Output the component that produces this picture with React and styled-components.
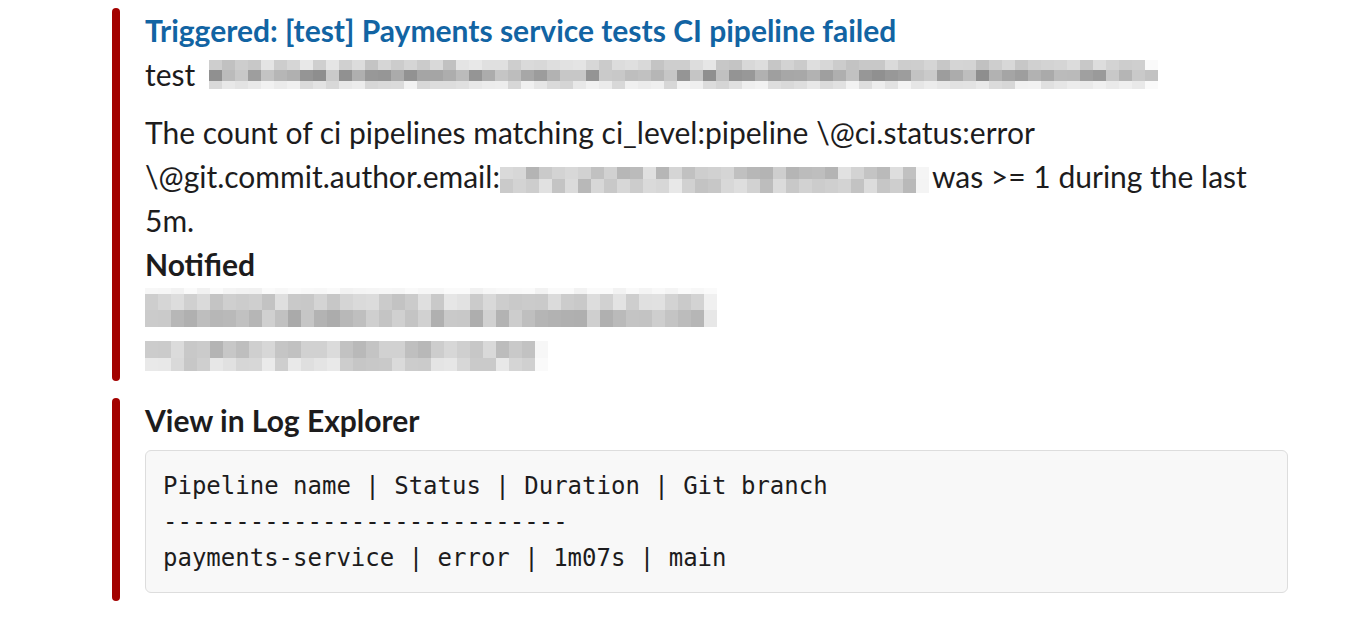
import React from 'react';
import styled, { createGlobalStyle } from 'styled-components';

const GlobalStyle = createGlobalStyle`
	html, body {
		margin: 0;
		padding: 0;
		background: #ffffff;
	}

	body {
		font-family: Lato, 'Noto Sans', sans-serif;
		color: #1d1c1d;
	}
`;

const Page = styled.div`
	width: 1346px;
	height: 618px;
	padding: 8px 58px 0 112px;
	box-sizing: border-box;
	overflow: hidden;
`;

const Attachment = styled.div`
	display: flex;
	gap: 25px;
	margin-top: ${props => props.$gap || 0}px;
`;

const Bar = styled.div`
	flex: 0 0 8px;
	width: 8px;
	border-radius: 4px;
	background: #a30200;
`;

const Body = styled.div`
	flex: 1;
	min-width: 0;
	font-size: 30px;
	line-height: 44px;
	padding-bottom: ${props => props.$bottom || 0}px;
`;

const Title = styled.div`
	font-weight: 700;
	color: #1264a3;
`;

const Line = styled.div`
	display: flex;
	align-items: center;
	gap: 14px;
`;

const Paragraph = styled.div`
	margin-top: 14px;
`;

const Heading = styled.div`
	font-weight: 700;
`;

const BlurList = styled.div`
	display: flex;
	flex-direction: column;
	align-items: flex-start;
	gap: 14px;
	padding: 2px 0 10px;
`;

const PixelGrid = styled.span`
	display: inline-grid;
	grid-auto-flow: column;
	grid-auto-columns: 13px;
	vertical-align: middle;
	margin: ${props => props.$margin || '0'};
`;

const Cell = styled.span`
	display: block;
	width: 13px;
`;

const CodeBlock = styled.pre`
	margin: 8px 0 0;
	padding: 17px 16px 16px 17px;
	background: #f8f8f8;
	border: 1px solid #dddddd;
	border-radius: 6px;
	font-family: 'DejaVu Sans Mono', 'Liberation Mono', monospace;
	font-size: 24px;
	line-height: 36px;
	color: #1d1c1d;
	white-space: pre-wrap;
`;

// cheap deterministic noise so the redacted blocks look the same on each load
const noise = (seed, i, j) => {
	const v = Math.sin(seed * 97.3 + i * 12.9898 + j * 78.233) * 43758.5453;
	return v - Math.floor(v);
};

const Pixelated = ({ width, rows, seed = 1, margin, fadeIn = 0 }) => {
	const cols = Math.round(width / 13);
	const cells = [];
	for (let i = 0; i < cols; i++) {
		rows.forEach((row, j) => {
			const n = noise(seed, i, j);
			const light = Math.round(row.base + (n - 0.5) * row.spread);
			const fade = i === cols - 1 ? 40 : i < fadeIn ? 18 : 0;
			const c = Math.min(250, light + fade);
			cells.push(
				<Cell
					key={`${i}-${j}`}
					style={{ height: row.h, background: `rgb(${c}, ${c}, ${c})`, gridRow: j + 1, gridColumn: i + 1 }}
				/>
			);
		});
	}
	return <PixelGrid $margin={margin}>{cells}</PixelGrid>;
};

const inlineRows = [
	{ h: 10, base: 212, spread: 40 },
	{ h: 11, base: 172, spread: 60 },
	{ h: 8, base: 228, spread: 30 },
];

const emailRows = [
	{ h: 12, base: 200, spread: 50 },
	{ h: 14, base: 208, spread: 50 },
];

const nameRows = [
	{ h: 6, base: 246, spread: 10 },
	{ h: 16, base: 212, spread: 36 },
	{ h: 17, base: 190, spread: 40 },
];

const nameRows2 = [
	{ h: 17, base: 200, spread: 40 },
	{ h: 13, base: 216, spread: 36 },
];

const App = () => (
	<>
		<GlobalStyle/>
		<Page>
			<Attachment>
				<Bar/>
				<Body>
					<Title>Triggered: [test] Payments service tests CI pipeline failed</Title>
					<Line>
						<span>test</span>
						<Pixelated width={955} rows={inlineRows} seed={3}/>
					</Line>
					<Paragraph>
						The count of ci pipelines matching ci_level:pipeline \@ci.status:error \@git.commit.author.email:
						<Pixelated width={429} rows={emailRows} seed={7} margin='0 3px 0 0' fadeIn={1}/>
						was &gt;= 1 during the last 5m.
					</Paragraph>
					<Heading>Notified</Heading>
					<BlurList>
						<Pixelated width={576} rows={nameRows} seed={11}/>
						<Pixelated width={400} rows={nameRows2} seed={19}/>
					</BlurList>
				</Body>
			</Attachment>

			<Attachment $gap={17}>
				<Bar/>
				<Body $bottom={8}>
					<Heading>View in Log Explorer</Heading>
					<CodeBlock>{`Pipeline name | Status | Duration | Git branch
----------------------------
payments-service | error | 1m07s | main`}</CodeBlock>
				</Body>
			</Attachment>
		</Page>
	</>
);

export default App;
